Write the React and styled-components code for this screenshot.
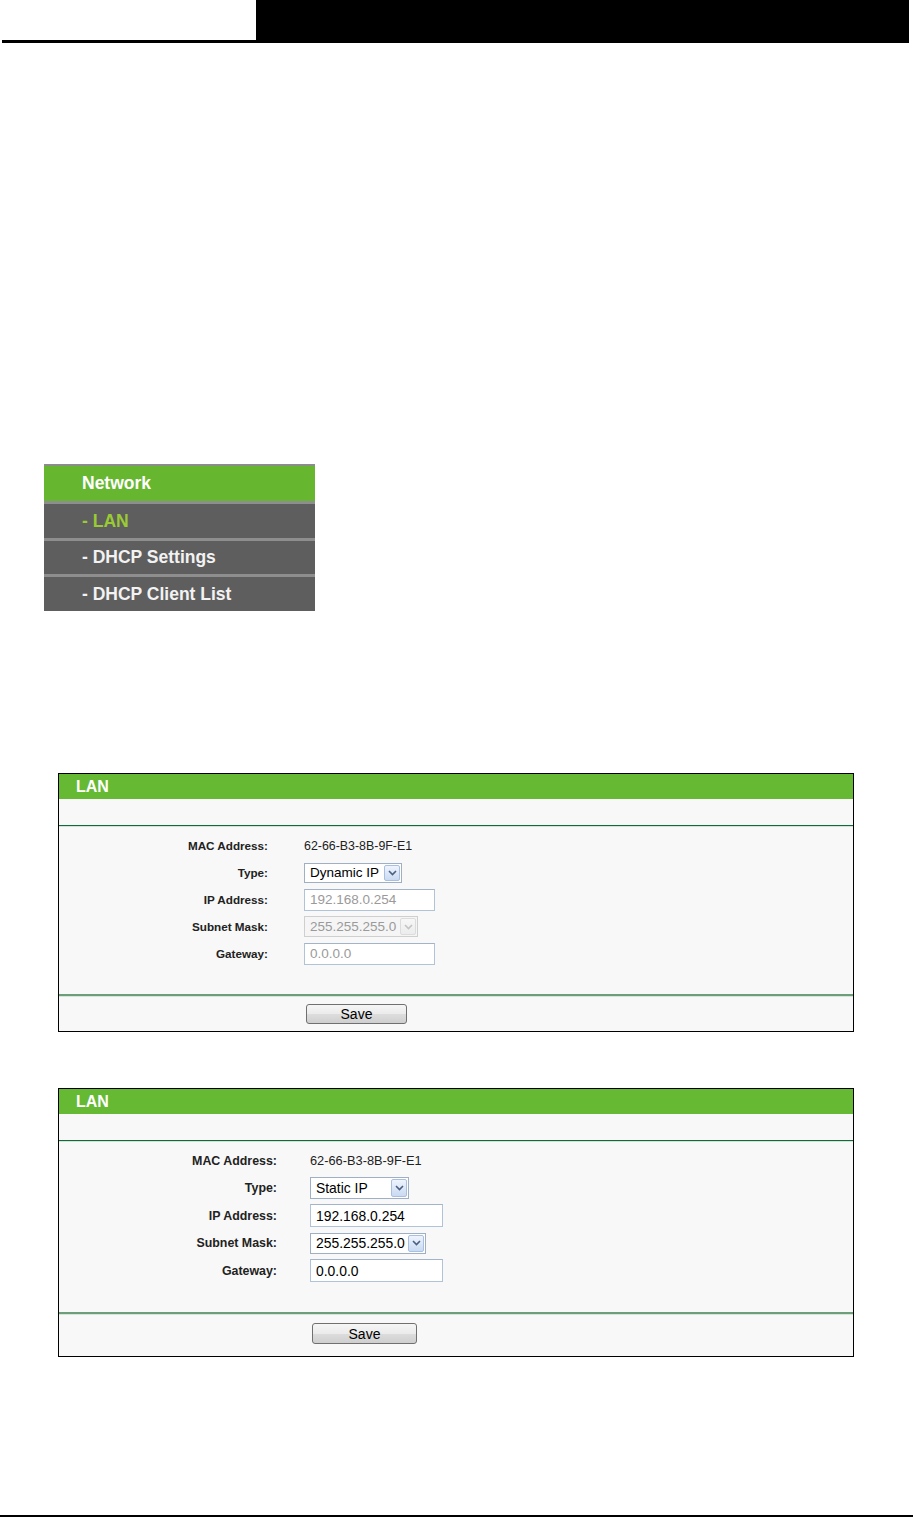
import React from "react";
import styled, { createGlobalStyle } from "styled-components";

const Global = createGlobalStyle`
  html, body { margin: 0; padding: 0; background: #fff; }
  body { font-family: "Liberation Sans", Arial, sans-serif; }
  * { box-sizing: border-box; }
`;

const Page = styled.div`
  width: 913px;
  height: 1517px;
  display: flex;
  flex-direction: column;
  overflow: hidden;
  background: #fff;
`;

const Header = styled.header`
  display: flex;
  height: 43px;
  margin: 0 4px 0 2px;
  border-bottom: 3px solid #000;
`;

const HeaderBlank = styled.div`
  width: 254px;
`;

const HeaderBlock = styled.div`
  flex: 1;
  background: #000;
`;

const Menu = styled.nav`
  margin: 421px 0 0 44px;
  width: 271px;
  border-top: 2px solid #8c8c8c;
  display: flex;
  flex-direction: column;
`;

const MenuItem = styled.div`
  height: ${(p) => p.$h}px;
  display: flex;
  align-items: center;
  padding-left: 38px;
  font-size: 17.5px;
  font-weight: bold;
  background: ${(p) => (p.$head ? "#66b72f" : "#5e5e5e")};
  color: ${(p) => (p.$active ? "#9acb34" : p.$head ? "#ffffff" : "#f2f2f2")};
  & + & {
    border-top: 3px solid #8e8e8e;
  }
`;

const Panel = styled.section`
  margin: ${(p) => p.$top}px 0 0 58px;
  width: 796px;
  border: 1px solid #000;
  background: #f8f8f8;
`;

const PanelTitle = styled.div`
  height: ${(p) => p.$h}px;
  background: #66b933;
  color: #fff;
  font-weight: bold;
  font-size: 16px;
  padding-left: 17px;
  display: flex;
  align-items: center;
`;

const SubBar = styled.div`
  height: 27px;
  border-bottom: 1px solid #0f6b3a;
  box-shadow: 0 1px 0 #d3e2d8;
`;

const FormBody = styled.div`
  display: grid;
  grid-template-columns: ${(p) => p.$labelW}px auto;
  column-gap: ${(p) => p.$gap}px;
  grid-auto-rows: ${(p) => p.$rowH}px;
  align-items: center;
  justify-content: start;
  padding: ${(p) => p.$padTop}px 0 ${(p) => p.$padBottom}px 0;
`;

const Label = styled.div`
  text-align: right;
  font-weight: bold;
  font-size: ${(p) => p.$fs}px;
  color: #222;
`;

const Value = styled.div`
  font-size: ${(p) => p.$fs}px;
  color: #222;
`;

const SelectBox = styled.div`
  width: ${(p) => p.$w}px;
  height: ${(p) => p.$h}px;
  border: 1px solid ${(p) => (p.$disabled ? "#cfcfcf" : "#9fb0c4")};
  background: ${(p) => (p.$disabled ? "#f5f5f5" : "#fff")};
  color: ${(p) => (p.$disabled ? "#9a9a9a" : "#000")};
  font-size: ${(p) => p.$fs}px;
  display: flex;
  align-items: center;
  padding: 1px 1px 1px 5px;
  white-space: nowrap;
`;

const SelectText = styled.span`
  flex: 1;
  min-width: 0;
  overflow: hidden;
`;

const SelectArrow = styled.span`
  flex: none;
  width: 16px;
  align-self: stretch;
  display: flex;
  align-items: center;
  justify-content: center;
  border: 1px solid ${(p) => (p.$disabled ? "#dcdcdc" : "#a9bfe0")};
  border-radius: 2px;
  background: ${(p) =>
    p.$disabled
      ? "linear-gradient(#f7f7f7, #ececec)"
      : "linear-gradient(#eef4fd, #c9daf2)"};
`;

const TextBox = styled.div`
  width: ${(p) => p.$w}px;
  height: ${(p) => p.$h}px;
  border: 1px solid #b1c3d6;
  border-top-color: #a3b4c8;
  background: #fff;
  color: ${(p) => (p.$disabled ? "#9a9a9a" : "#000")};
  font-size: ${(p) => p.$fs}px;
  display: flex;
  align-items: center;
  padding-left: 5px;
`;

const Footer = styled.div`
  height: ${(p) => p.$h}px;
  border-top: 2px solid #6c9e79;
  box-shadow: inset 0 1px 0 #d5e5da;
  padding: ${(p) => p.$padTop}px 0 0 ${(p) => p.$padLeft}px;
`;

const SaveButton = styled.button`
  width: ${(p) => p.$w}px;
  height: ${(p) => p.$h}px;
  border: 1px solid #707070;
  border-radius: 3px;
  background: linear-gradient(#f6f6f6 0%, #ebebeb 50%, #dddddd 51%, #cfcfcf 100%);
  font-family: "Liberation Sans", Arial, sans-serif;
  font-size: 14px;
  color: #000;
  padding: 0;
  display: block;
`;

const BottomRule = styled.div`
  margin-top: auto;
  height: 2px;
  background: #000;
`;

const Chevron = ({ disabled }) => (
  <svg width="9" height="6" viewBox="0 0 9 6">
    <path
      d="M1 1 L4.5 4.5 L8 1"
      fill="none"
      stroke={disabled ? "#c4c4c4" : "#4b5f80"}
      strokeWidth="1.6"
    />
  </svg>
);

const Select = ({ value, w, h, fs, disabled }) => (
  <SelectBox $w={w} $h={h} $fs={fs} $disabled={disabled}>
    <SelectText>{value}</SelectText>
    <SelectArrow $disabled={disabled}>
      <Chevron disabled={disabled} />
    </SelectArrow>
  </SelectBox>
);

const LanPanel = ({ cfg, top }) => (
  <Panel $top={top}>
    <PanelTitle $h={cfg.titleH}>LAN</PanelTitle>
    <SubBar />
    <FormBody
      $labelW={cfg.labelW}
      $gap={cfg.gap}
      $rowH={cfg.rowH}
      $padTop={cfg.padTop}
      $padBottom={cfg.padBottom}
    >
      <Label $fs={cfg.labelFs}>MAC Address:</Label>
      <Value $fs={cfg.valueFs}>62-66-B3-8B-9F-E1</Value>

      <Label $fs={cfg.labelFs}>Type:</Label>
      <Select value={cfg.type} w={cfg.typeW} h={cfg.typeH} fs={cfg.ctlFs} />

      <Label $fs={cfg.labelFs}>IP Address:</Label>
      <TextBox $w={cfg.inputW} $h={cfg.inputH} $fs={cfg.ctlFs} $disabled={cfg.disabled}>
        192.168.0.254
      </TextBox>

      <Label $fs={cfg.labelFs}>Subnet Mask:</Label>
      <Select
        value="255.255.255.0"
        w={cfg.maskW}
        h={cfg.maskH}
        fs={cfg.ctlFs}
        disabled={cfg.disabled}
      />

      <Label $fs={cfg.labelFs}>Gateway:</Label>
      <TextBox $w={cfg.inputW} $h={cfg.inputH} $fs={cfg.ctlFs} $disabled={cfg.disabled}>
        0.0.0.0
      </TextBox>
    </FormBody>
    <Footer $h={cfg.footH} $padTop={cfg.footPad} $padLeft={cfg.labelW + cfg.gap + 2}>
      <SaveButton $w={cfg.btnW} $h={cfg.btnH}>Save</SaveButton>
    </Footer>
  </Panel>
);

const dynamicCfg = {
  titleH: 25,
  labelW: 209,
  gap: 36,
  rowH: 27,
  padTop: 6,
  padBottom: 27,
  labelFs: 11.7,
  valueFs: 12.4,
  ctlFs: 13.5,
  type: "Dynamic IP",
  typeW: 98,
  typeH: 20,
  inputW: 131,
  inputH: 22,
  maskW: 114,
  maskH: 21,
  disabled: true,
  footH: 37,
  footPad: 8,
  btnW: 101,
  btnH: 20,
};

const staticCfg = {
  titleH: 25,
  labelW: 218,
  gap: 33,
  rowH: 27.5,
  padTop: 6,
  padBottom: 27.5,
  labelFs: 12.4,
  valueFs: 12.8,
  ctlFs: 13.9,
  type: "Static IP",
  typeW: 99,
  typeH: 22,
  inputW: 133,
  inputH: 23,
  maskW: 116,
  maskH: 21,
  disabled: false,
  footH: 44,
  footPad: 9,
  btnW: 105,
  btnH: 21,
};

export default function App() {
  return (
    <>
      <Global />
      <Page>
        <Header>
          <HeaderBlank />
          <HeaderBlock />
        </Header>
        <Menu>
          <MenuItem $head $h={35}>Network</MenuItem>
          <MenuItem $active $h={37}>- LAN</MenuItem>
          <MenuItem $h={36}>- DHCP Settings</MenuItem>
          <MenuItem $h={37}>- DHCP Client List</MenuItem>
        </Menu>
        <LanPanel cfg={dynamicCfg} top={162} />
        <LanPanel cfg={staticCfg} top={56} />
        <BottomRule />
      </Page>
    </>
  );
}
